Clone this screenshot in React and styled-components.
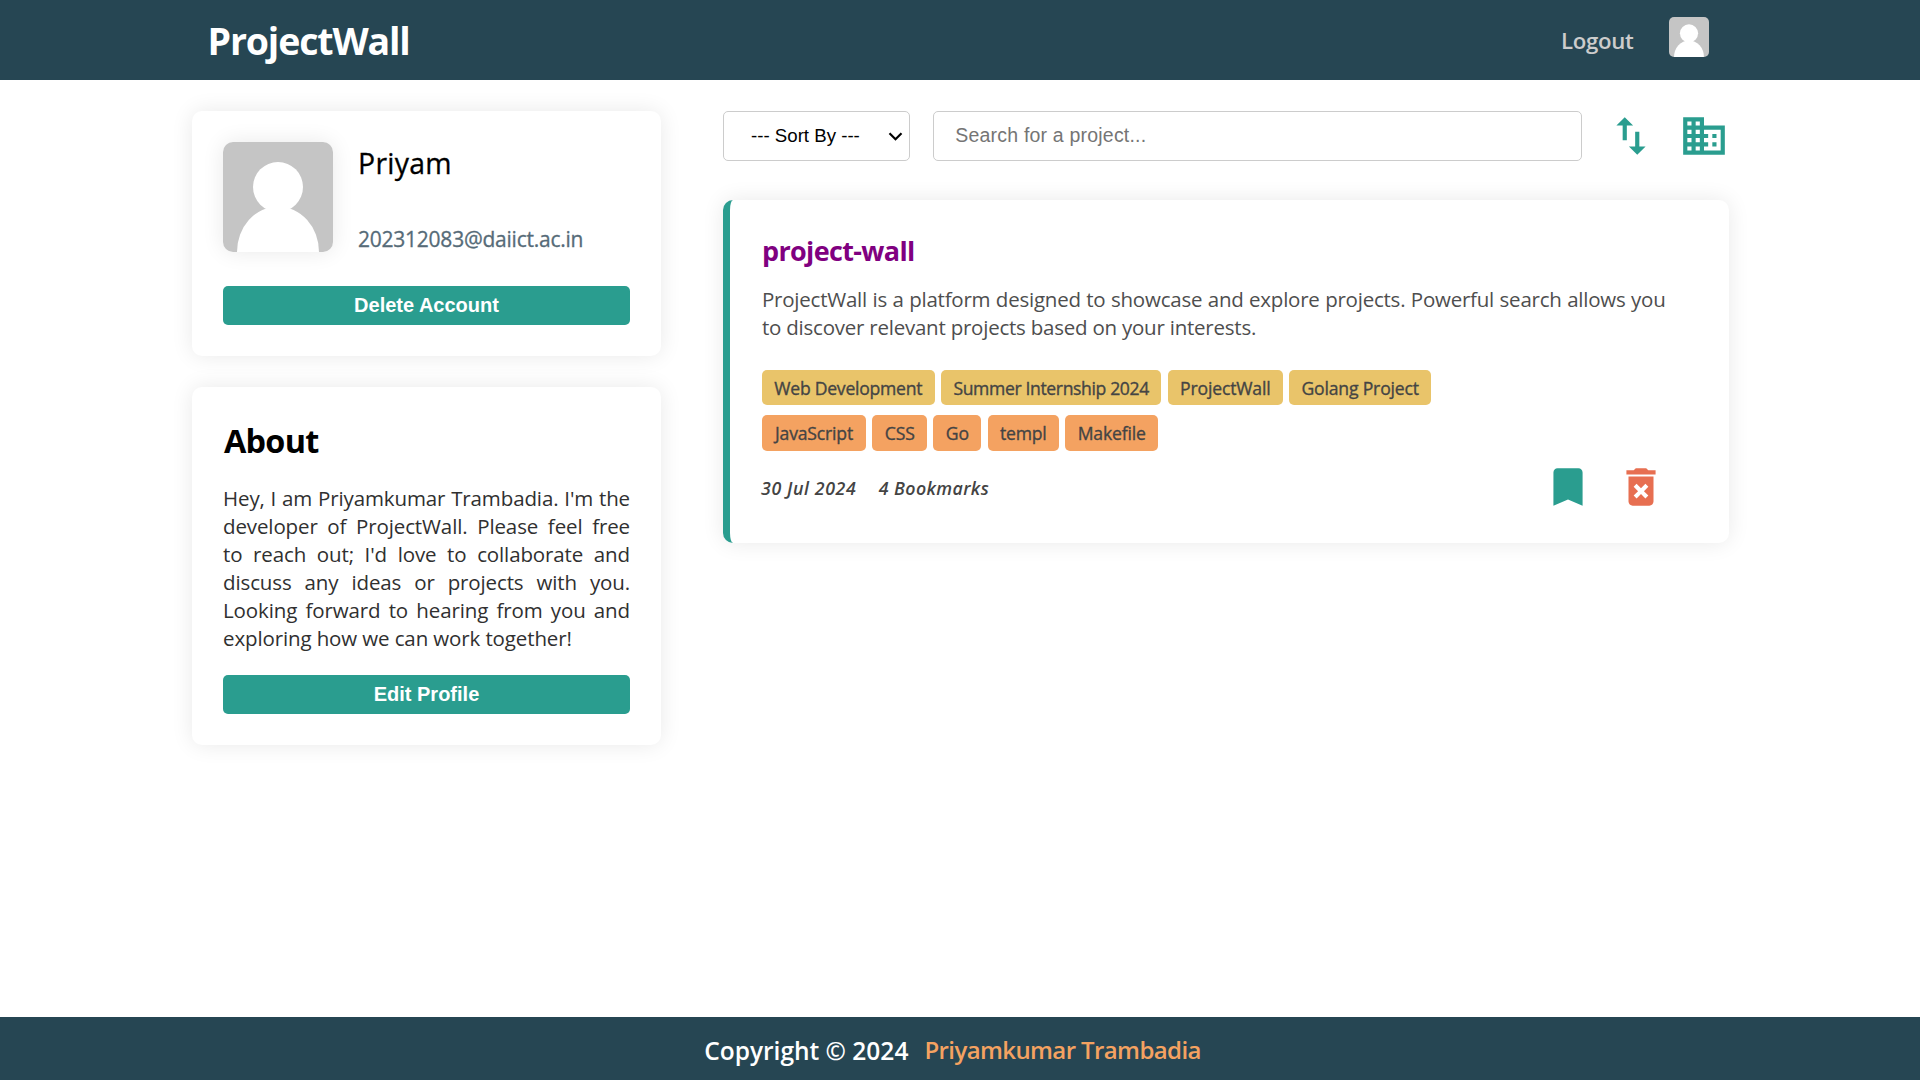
import React from "react";
import styled, { createGlobalStyle } from "styled-components";
import { MdBookmark, MdDeleteForever, MdDomain, MdSwapVert } from "react-icons/md";

const colors = {
  navy: "#264653",
  teal: "#2a9d8f",
  yellow: "#e9c46a",
  orange: "#f4a261",
  red: "#e76f51",
};

const shadow = "0 0 22px rgba(0, 0, 0, 0.09)";

const GlobalStyle = createGlobalStyle`
  *, *::before, *::after { box-sizing: border-box; }
  body {
    margin: 0;
    background: #fff;
    font-family: "Segoe UI", "Open Sans", "Noto Sans", sans-serif;
    color: #000;
  }
  h1, h2, h3, p { margin: 0; }
`;

const Page = styled.div`
  min-height: 100vh;
  display: flex;
  flex-direction: column;
`;

const Header = styled.header`
  height: 80px;
  background: ${colors.navy};
  display: flex;
  align-items: center;
  justify-content: space-between;
  padding: 0 211px 0 207.5px;
`;

const Logo = styled.h1`
  padding-top: 2px;
  font-size: 37.5px;
  font-weight: 700;
  line-height: 78px;
  letter-spacing: -1.15px;
  color: #fff;
`;

const Nav = styled.nav`
  display: flex;
  align-items: center;
  gap: 35.5px;
`;

const NavLink = styled.a`
  padding-top: 2px;
  font-size: 22.2px;
  font-weight: 600;
  line-height: 30px;
  letter-spacing: -0.3px;
  color: #ccc;
`;

const NavAvatar = styled.svg`
  width: 40px;
  height: 40px;
  margin-bottom: 6px;
  border-radius: 5px;
  display: block;
`;

const Main = styled.main`
  flex: 1;
  display: grid;
  grid-template-columns: 469px 1006px;
  column-gap: 62px;
  align-items: start;
  padding: 31px 191px 0 192px;
`;

const Sidebar = styled.aside`
  display: grid;
  gap: 31px;
`;

const Card = styled.section`
  padding: 31px;
  border-radius: 10px;
  background: #fff;
  box-shadow: ${shadow};
`;

const Identity = styled.div`
  display: flex;
  gap: 25px;
`;

const Avatar = styled.svg`
  width: 110px;
  height: 110px;
  flex: none;
  display: block;
  border-radius: 10px;
  box-shadow: ${shadow};
`;

const IdentityText = styled.div`
  display: flex;
  flex-direction: column;
  justify-content: space-between;
  height: 111px;
  margin-bottom: -1px;
`;

const Name = styled.p`
  font-size: 28.4px;
  font-weight: 400;
  line-height: 42px;
  letter-spacing: 0.3px;
  -webkit-text-stroke: 0.3px;
`;

const Email = styled.p`
  font-size: 21px;
  font-weight: 400;
  line-height: 28px;
  letter-spacing: -0.24px;
  -webkit-text-stroke: 0.3px;
  color: #566b78;
`;

const Button = styled.button`
  display: block;
  width: 100%;
  height: 39px;
  margin-top: ${(p) => p.$top}px;
  padding: 0;
  border: 0;
  border-radius: 5px;
  background: ${colors.teal};
  color: #fff;
  font: 700 20px/39px Arial, "Liberation Sans", sans-serif;
`;

const AboutTitle = styled.h2`
  padding-top: 1px;
  padding-left: 1px;
  font-size: 32.4px;
  font-weight: 700;
  line-height: 43px;
  letter-spacing: -0.75px;
`;

const AboutText = styled.p`
  margin-top: 22px;
  font-size: 20.5px;
  font-weight: 400;
  line-height: 28px;
  letter-spacing: -0.12px;
  text-align: justify;
  color: #303030;
`;

const Toolbar = styled.div`
  display: flex;
  align-items: center;
  gap: 23.3px;
  height: 50px;
`;

const SortBox = styled.div`
  position: relative;
  width: 187px;
  height: 50px;
`;

const SortSelect = styled.select`
  appearance: none;
  width: 100%;
  height: 100%;
  padding: 0 0 1px 27px;
  border: 1px solid #ccc;
  border-radius: 5px;
  background: #fff;
  color: #000;
  font: 400 18.67px Arial, "Liberation Sans", sans-serif;
`;

const Chevron = styled.svg`
  position: absolute;
  right: 7px;
  top: 20px;
  width: 15px;
  height: 11px;
  pointer-events: none;
`;

const SearchInput = styled.input`
  flex: 1;
  min-width: 0;
  height: 50px;
  padding: 0 21px 2px;
  border: 1px solid #ccc;
  border-radius: 5px;
  background: #fff;
  font: 400 19.5px Arial, "Liberation Sans", sans-serif;
  letter-spacing: 0.2px;
  &::placeholder { color: #757575; }
`;

const IconButton = styled.span`
  display: flex;
  flex: none;
  font-size: 50px;
  color: ${(p) => p.$color};
`;

const ProjectCard = styled.article`
  margin-top: 39px;
  padding: 31px 63.5px 31.25px 32px;
  border-left: 7px solid ${colors.teal};
  border-radius: 10px;
  background: #fff;
  box-shadow: ${shadow};
`;

const ProjectTitle = styled.h3`
  padding-top: 1px;
  font-size: 27px;
  font-weight: 700;
  line-height: 37px;
  letter-spacing: -0.65px;
  color: purple;
`;

const ProjectText = styled.p`
  margin: 15.7px 0 29.3px;
  font-size: 20.5px;
  font-weight: 400;
  line-height: 28px;
  letter-spacing: -0.23px;
  text-align: justify;
  color: #4e4e4e;
`;

const TagRow = styled.div`
  display: flex;
  gap: ${(p) => p.$gap}px;
  height: ${(p) => p.$height}px;
  & + & { margin-top: 10px; }
`;

const Tag = styled.span`
  display: flex;
  align-items: center;
  justify-content: center;
  width: ${(p) => p.$width}px;
  padding-top: 1px;
  border-radius: 5px;
  background: ${(p) => p.$color};
  color: #444;
  font-size: 17.6px;
  font-weight: 400;
  letter-spacing: ${(p) => p.$tracking ?? -0.18}px;
  -webkit-text-stroke: 0.35px;
  white-space: nowrap;
`;

const CardFooter = styled.div`
  display: flex;
  align-items: center;
  justify-content: space-between;
  margin-top: 10.75px;
`;

const Meta = styled.div`
  display: flex;
  gap: 22.5px;
  padding-top: 3px;
  margin-left: -1px;
  font-size: 17.8px;
  font-weight: 600;
  font-style: italic;
  letter-spacing: 0.5px;
  color: #444;
`;

const PostedOn = styled.span`
  letter-spacing: 0.6px;
`;

const Bookmarks = styled.span`
  letter-spacing: 0.4px;
`;

const Actions = styled.div`
  display: flex;
  gap: 23px;
`;

const Footer = styled.footer`
  height: 63px;
  padding-right: 15px;
  background: ${colors.navy};
  display: flex;
  align-items: center;
  justify-content: center;
  gap: 16px;
  font-size: 24.5px;
  font-weight: 600;
  color: #fff;
`;

const Copyright = styled.span`
  padding-top: 3px;
`;

const Author = styled.a`
  padding-top: 1px;
  font-size: 24px;
  letter-spacing: -0.6px;
  color: ${colors.orange};
`;

const topics = [
  ["Web Development", 172.6, -0.25],
  ["Summer Internship 2024", 220.4, -0.37],
  ["ProjectWall", 115],
  ["Golang Project", 142],
];

const languages = [
  ["JavaScript", 104],
  ["CSS", 55],
  ["Go", 48],
  ["templ", 71.4],
  ["Makefile", 93],
];

function Person({ as: Frame }) {
  return (
    <Frame viewBox="0 0 110 110">
      <rect width="110" height="110" fill="#c5c5c5" />
      <circle cx="55" cy="45" r="25" fill="#fff" />
      <ellipse cx="55" cy="110" rx="41" ry="45.5" fill="#fff" />
    </Frame>
  );
}

export default function App() {
  return (
    <>
      <GlobalStyle />
      <Page>
        <Header>
          <Logo>ProjectWall</Logo>
          <Nav>
            <NavLink>Logout</NavLink>
            <Person as={NavAvatar} />
          </Nav>
        </Header>
        <Main>
          <Sidebar>
            <Card>
              <Identity>
                <Person as={Avatar} />
                <IdentityText>
                  <Name>Priyam</Name>
                  <Email>202312083@daiict.ac.in</Email>
                </IdentityText>
              </Identity>
              <Button $top={34}>Delete Account</Button>
            </Card>
            <Card>
              <AboutTitle>About</AboutTitle>
              <AboutText>
                Hey, I am Priyamkumar Trambadia. I'm the developer of ProjectWall. Please feel free to
                reach out; I'd love to collaborate and discuss any ideas or projects with you. Looking
                forward to hearing from you and exploring how we can work together!
              </AboutText>
              <Button $top={23}>Edit Profile</Button>
            </Card>
          </Sidebar>
          <div>
            <Toolbar>
              <SortBox>
                <SortSelect defaultValue="">
                  <option value="">--- Sort By ---</option>
                </SortSelect>
                <Chevron viewBox="0 0 15 11" fill="none" stroke="#000" strokeWidth="2.2">
                  <path d="M1.5 2.2 7.5 8.2 13.5 2.2" />
                </Chevron>
              </SortBox>
              <SearchInput placeholder="Search for a project..." />
              <IconButton $color={colors.teal}><MdSwapVert /></IconButton>
              <IconButton $color={colors.teal}><MdDomain /></IconButton>
            </Toolbar>
            <ProjectCard>
              <ProjectTitle>project-wall</ProjectTitle>
              <ProjectText>
                ProjectWall is a platform designed to showcase and explore projects. Powerful search
                allows you to discover relevant projects based on your interests.
              </ProjectText>
              <TagRow $height={35} $gap={6.4}>
                {topics.map(([label, width, tracking]) => (
                  <Tag key={label} $width={width} $tracking={tracking} $color={colors.yellow}>{label}</Tag>
                ))}
              </TagRow>
              <TagRow $height={36} $gap={6.2}>
                {languages.map(([label, width]) => (
                  <Tag key={label} $width={width} $color={colors.orange}>{label}</Tag>
                ))}
              </TagRow>
              <CardFooter>
                <Meta>
                  <PostedOn>30 Jul 2024</PostedOn>
                  <Bookmarks>4 Bookmarks</Bookmarks>
                </Meta>
                <Actions>
                  <IconButton $color={colors.teal}><MdBookmark /></IconButton>
                  <IconButton $color={colors.red}><MdDeleteForever /></IconButton>
                </Actions>
              </CardFooter>
            </ProjectCard>
          </div>
        </Main>
        <Footer>
          <Copyright>Copyright © 2024</Copyright>
          <Author>Priyamkumar Trambadia</Author>
        </Footer>
      </Page>
    </>
  );
}
